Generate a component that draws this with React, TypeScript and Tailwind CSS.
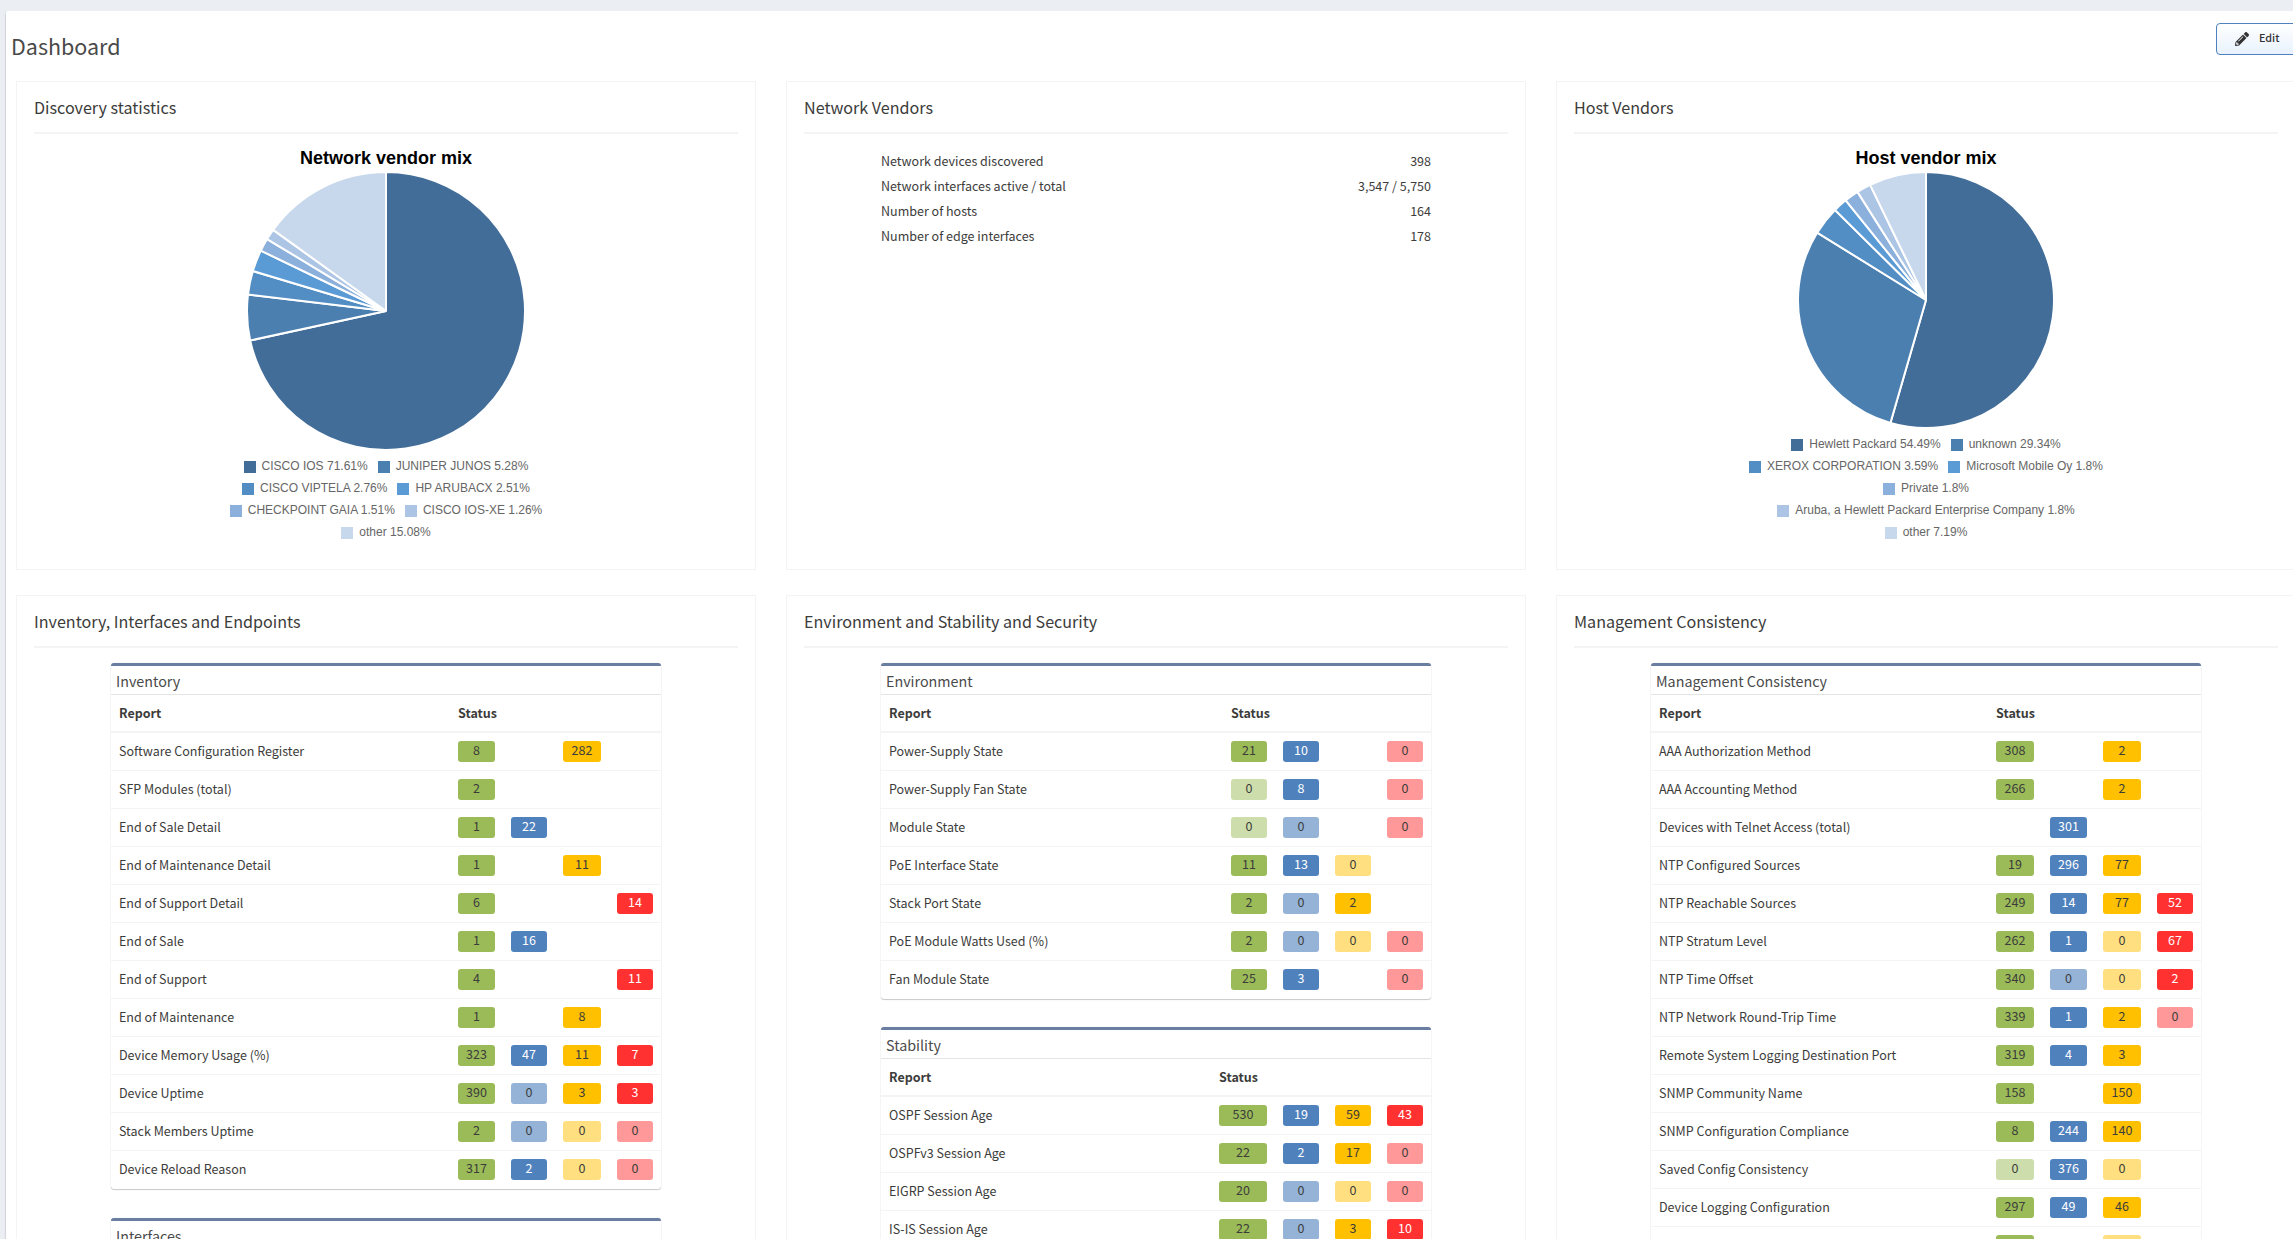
import React from "react";
import { FaPencilAlt } from "react-icons/fa";

type Value = number | null;
type Row = [string, Value, Value, Value, Value];
type Slice = { label: string; value: number };

const SHADES = ["#416d98", "#4b7fb0", "#528ec3", "#5b9bd5", "#8cb0dc", "#adc5e5", "#c8d8ec"];

const networkMix: Slice[] = [
  { label: "CISCO IOS 71.61%", value: 71.61 },
  { label: "JUNIPER JUNOS 5.28%", value: 5.28 },
  { label: "CISCO VIPTELA 2.76%", value: 2.76 },
  { label: "HP ARUBACX 2.51%", value: 2.51 },
  { label: "CHECKPOINT GAIA 1.51%", value: 1.51 },
  { label: "CISCO IOS-XE 1.26%", value: 1.26 },
  { label: "other 15.08%", value: 15.08 },
];

const hostMix: Slice[] = [
  { label: "Hewlett Packard 54.49%", value: 54.49 },
  { label: "unknown 29.34%", value: 29.34 },
  { label: "XEROX CORPORATION 3.59%", value: 3.59 },
  { label: "Microsoft Mobile Oy 1.8%", value: 1.8 },
  { label: "Private 1.8%", value: 1.8 },
  { label: "Aruba, a Hewlett Packard Enterprise Company 1.8%", value: 1.8 },
  { label: "other 7.19%", value: 7.19 },
];

const networkStats: [string, string][] = [
  ["Network devices discovered", "398"],
  ["Network interfaces active / total", "3,547 / 5,750"],
  ["Number of hosts", "164"],
  ["Number of edge interfaces", "178"],
];

const inventory: Row[] = [
  ["Software Configuration Register", 8, null, 282, null],
  ["SFP Modules (total)", 2, null, null, null],
  ["End of Sale Detail", 1, 22, null, null],
  ["End of Maintenance Detail", 1, null, 11, null],
  ["End of Support Detail", 6, null, null, 14],
  ["End of Sale", 1, 16, null, null],
  ["End of Support", 4, null, null, 11],
  ["End of Maintenance", 1, null, 8, null],
  ["Device Memory Usage (%)", 323, 47, 11, 7],
  ["Device Uptime", 390, 0, 3, 3],
  ["Stack Members Uptime", 2, 0, 0, 0],
  ["Device Reload Reason", 317, 2, 0, 0],
];

const environment: Row[] = [
  ["Power-Supply State", 21, 10, null, 0],
  ["Power-Supply Fan State", 0, 8, null, 0],
  ["Module State", 0, 0, null, 0],
  ["PoE Interface State", 11, 13, 0, null],
  ["Stack Port State", 2, 0, 2, null],
  ["PoE Module Watts Used (%)", 2, 0, 0, 0],
  ["Fan Module State", 25, 3, null, 0],
];

const stability: Row[] = [
  ["OSPF Session Age", 530, 19, 59, 43],
  ["OSPFv3 Session Age", 22, 2, 17, 0],
  ["EIGRP Session Age", 20, 0, 0, 0],
  ["IS-IS Session Age", 22, 0, 3, 10],
];

const management: Row[] = [
  ["AAA Authorization Method", 308, null, 2, null],
  ["AAA Accounting Method", 266, null, 2, null],
  ["Devices with Telnet Access (total)", null, 301, null, null],
  ["NTP Configured Sources", 19, 296, 77, null],
  ["NTP Reachable Sources", 249, 14, 77, 52],
  ["NTP Stratum Level", 262, 1, 0, 67],
  ["NTP Time Offset", 340, 0, 0, 2],
  ["NTP Network Round-Trip Time", 339, 1, 2, 0],
  ["Remote System Logging Destination Port", 319, 4, 3, null],
  ["SNMP Community Name", 158, null, 150, null],
  ["SNMP Configuration Compliance", 8, 244, 140, null],
  ["Saved Config Consistency", 0, 376, 0, null],
  ["Device Logging Configuration", 297, 49, 46, null],
];

const TONES = [
  { on: "bg-[#9bbb59] text-[#3c3c3b]", off: "bg-[#cdddac] text-[#3c3c3b]" },
  { on: "bg-[#4f81bd] text-white", off: "bg-[#95b3d7] text-[#3c3c3b]" },
  { on: "bg-[#ffc000] text-[#3c3c3b]", off: "bg-[#ffdf80] text-[#3c3c3b]" },
  { on: "bg-[#ff3131] text-white", off: "bg-[#ff9898] text-[#3c3c3b]" },
];

function Badge({ value, tone }: { value: Value; tone: number }) {
  if (value === null) return <span />;
  const colours = value === 0 ? TONES[tone].off : TONES[tone].on;
  return <span className={`h-[21px] rounded-[3px] text-center leading-[17px] ${colours}`}>{value}</span>;
}

type TableProps = { title: string; rows: Row[]; columns: string; children?: React.ReactNode };

function ReportTable({ title, rows, columns, children }: TableProps) {
  return (
    <section className="mx-auto w-[550px] shrink-0 rounded-[3px] border-t-[3px] border-t-[#6a7ea1] bg-white shadow-[0_1px_1px_rgba(0,0,0,0.2),0_0_1px_rgba(0,0,0,0.2)]">
      <h3 className="h-[29px] border-b border-[#e4e4e4] pl-[5px] text-[14.32px] leading-[29px] text-[#4a4a4a]">{title}</h3>
      <div className={`grid h-[38px] gap-x-4 border-b-2 border-[#f4f4f4] px-2 font-bold leading-[35px] ${columns}`}>
        <span>Report</span>
        <span>Status</span>
      </div>
      {rows.map((row, i) => (
        <div key={i} className={`grid h-[38px] items-center gap-x-4 border-b border-[#f4f4f4] px-2 last:border-transparent ${columns}`}>
          <span className="pb-[2px] leading-[35px]">{row[0]}</span>
          {([row[1], row[2], row[3], row[4]] as Value[]).map((v, tone) => (
            <Badge key={tone} value={v} tone={tone} />
          ))}
        </div>
      ))}
      {children}
    </section>
  );
}

function Card({ title, children }: { title: string; children?: React.ReactNode }) {
  return (
    <article className="flex flex-col overflow-hidden border border-[#f4f4f4] px-[17px]">
      <h2 className="mb-[15px] h-[52px] shrink-0 border-b-2 border-[#f4f4f4] text-[16.12px] leading-[50px] text-[#3c3c3b]">{title}</h2>
      {children}
    </article>
  );
}

function Pie({ slices, radius }: { slices: Slice[]; radius: number }) {
  const total = slices.reduce((sum, s) => sum + s.value, 0);
  const size = radius * 2 + 2;
  const c = radius + 1;
  const point = (f: number) => {
    const a = f * Math.PI * 2 - Math.PI / 2;
    return `${(c + radius * Math.cos(a)).toFixed(2)} ${(c + radius * Math.sin(a)).toFixed(2)}`;
  };
  let start = 0;
  return (
    <svg width={size} height={size} viewBox={`0 0 ${size} ${size}`} className="shrink-0">
      {slices.map((s, i) => {
        const end = start + s.value / total;
        const d = `M${c} ${c}L${point(start)}A${radius} ${radius} 0 ${end - start > 0.5 ? 1 : 0} 1 ${point(end)}Z`;
        start = end;
        return <path key={s.label} d={d} fill={SHADES[i]} stroke="#fff" strokeWidth="2" strokeLinejoin="bevel" />;
      })}
    </svg>
  );
}

function PieChart({ title, slices, radius, lines }: { title: string; slices: Slice[]; radius: number; lines: number[][] }) {
  return (
    <div className="-mt-[3px] flex flex-col items-center font-['Liberation_Sans',Arial,sans-serif]">
      <h3 className="h-[25px] text-[18px] font-bold leading-[24px] text-black">{title}</h3>
      <Pie slices={slices} radius={radius} />
      <ul className="mt-1 text-xs text-[#666]">
        {lines.map((line) => (
          <li key={line[0]} className="flex h-[22px] items-center justify-center gap-[10px]">
            {line.map((i) => (
              <span key={i} className="flex items-center gap-[6px] leading-[22px]">
                <i className="size-3 translate-y-px" style={{ backgroundColor: SHADES[i] }} />
                {slices[i].label}
              </span>
            ))}
          </li>
        ))}
      </ul>
    </div>
  );
}

export default function App() {
  return (
    <div className="h-[1239px] w-[2293px] overflow-hidden bg-[#ebeff4] pl-[6px] pt-[11px] font-['Noto_Sans_CJK_SC','Source_Sans_Pro',sans-serif] text-[12.53px] text-[#3c3c3b]">
      <main className="h-[1400px] w-[2320px] rounded-tl-[3px] bg-white shadow-[-1px_1px_1px_rgba(0,0,0,0.12)]">
        <header className="flex h-[70px] items-start justify-between pl-[5px] pr-[26px]">
          <h1 className="pt-[13px] text-[21.5px] leading-[44px] text-[#4a4a4a]">Dashboard</h1>
          <button className="mt-3 flex h-8 w-[84px] items-center gap-[10px] rounded-[4px] border border-[#4f81bd] bg-linear-to-b from-white to-[#e8f2fd] pl-[18px] text-[10.75px] font-medium text-[#333]">
            <FaPencilAlt className="size-[14px]" />
            <span className="-mt-px">Edit</span>
          </button>
        </header>
        <div className="ml-[10px] grid grid-cols-[740px_740px_740px] grid-rows-[489px_900px] gap-x-[30px] gap-y-[25px]">
          <Card title="Discovery statistics">
            <PieChart title="Network vendor mix" slices={networkMix} radius={139} lines={[[0, 1], [2, 3], [4, 5], [6]]} />
          </Card>
          <Card title="Network Vendors">
            <dl className="-mt-px mx-auto w-[550px]">
              {networkStats.map(([label, value]) => (
                <div key={label} className="flex h-[25px] justify-between leading-[25px]">
                  <dt>{label}</dt>
                  <dd>{value}</dd>
                </div>
              ))}
            </dl>
          </Card>
          <Card title="Host Vendors">
            <PieChart title="Host vendor mix" slices={hostMix} radius={128} lines={[[0, 1], [2, 3], [4], [5], [6]]} />
          </Card>
          <Card title="Inventory, Interfaces and Endpoints">
            <div className="flex flex-col gap-[29px]">
              <ReportTable title="Inventory" rows={inventory} columns="grid-cols-[1fr_37px_36px_38px_36px]" />
              <ReportTable title="Interfaces" rows={[]} columns="grid-cols-[1fr_37px_36px_38px_36px]" />
            </div>
          </Card>
          <Card title="Environment and Stability and Security">
            <div className="flex flex-col gap-7">
              <ReportTable title="Environment" rows={environment} columns="grid-cols-[1fr_36px_36px_36px_36px]" />
              <ReportTable title="Stability" rows={stability} columns="grid-cols-[1fr_48px_36px_36px_36px]" />
            </div>
          </Card>
          <Card title="Management Consistency">
            <ReportTable title="Management Consistency" rows={management} columns="grid-cols-[1fr_38px_37px_38px_36px]">
              <div className="grid h-[38px] grid-cols-[1fr_38px_37px_38px_36px] gap-x-4 px-2 pt-2">
                <span className="col-start-2 h-[21px] rounded-[3px] bg-[#9bbb59]" />
                <span className="col-start-4 h-[21px] rounded-[3px] bg-[#ffdf80]" />
              </div>
            </ReportTable>
          </Card>
        </div>
      </main>
    </div>
  );
}
